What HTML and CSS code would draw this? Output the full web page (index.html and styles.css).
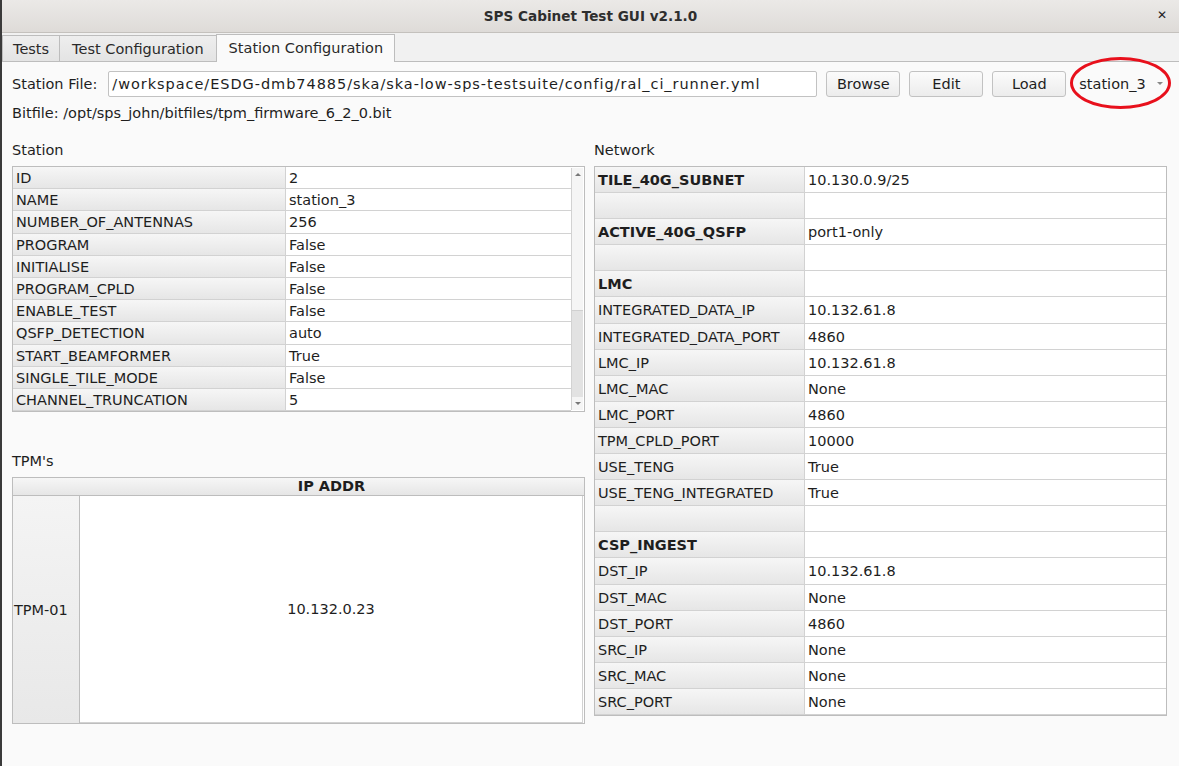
FILE: index.html
```html
<!DOCTYPE html>
<html>
<head>
    <title>SPS Cabinet Test GUI v2.1.0</title>
    <link rel="stylesheet" href="styles.css">
</head>
<body>
<div class="window">
    <div class="titlebar">
        <span class="title">SPS Cabinet Test GUI v2.1.0</span>
        <span class="close">&#x2715;</span>
    </div>

    <div class="tabs">
        <div class="tab">Tests</div>
        <div class="tab">Test Configuration</div>
        <div class="tab active">Station Configuration</div>
    </div>

    <div class="panel">
        <div class="file-row">
            <label class="file-label">Station File:</label>
            <div class="path">/workspace/ESDG-dmb74885/ska/ska-low-sps-testsuite/config/ral_ci_runner.yml</div>
            <button class="btn">Browse</button>
            <button class="btn">Edit</button>
            <button class="btn">Load</button>
            <div class="combo">
                <span>station_3</span>
                <span class="caret"></span>
                <div class="ring"></div>
            </div>
        </div>
        <div class="bitfile">Bitfile: /opt/sps_john/bitfiles/tpm_firmware_6_2_0.bit</div>

        <div class="columns">
            <div class="col">
                <div class="caption">Station</div>
                <div class="station-table">
                    <div class="grid station-grid">
                        <div class="key">ID</div><div class="val">2</div>
                        <div class="key">NAME</div><div class="val">station_3</div>
                        <div class="key">NUMBER_OF_ANTENNAS</div><div class="val">256</div>
                        <div class="key">PROGRAM</div><div class="val">False</div>
                        <div class="key">INITIALISE</div><div class="val">False</div>
                        <div class="key">PROGRAM_CPLD</div><div class="val">False</div>
                        <div class="key">ENABLE_TEST</div><div class="val">False</div>
                        <div class="key">QSFP_DETECTION</div><div class="val">auto</div>
                        <div class="key">START_BEAMFORMER</div><div class="val">True</div>
                        <div class="key">SINGLE_TILE_MODE</div><div class="val">False</div>
                        <div class="key">CHANNEL_TRUNCATION</div><div class="val">5</div>
                        <div class="key">&nbsp;</div><div class="val">&nbsp;</div>
                    </div>
                    <div class="scrollbar">
                        <div class="arrow up"></div>
                        <div class="track"><div class="thumb"></div></div>
                        <div class="arrow down"></div>
                    </div>
                </div>

                <div class="caption tpm-caption">TPM's</div>
                <div class="tpm-table">
                    <div class="tpm-head">
                        <div class="corner"></div>
                        <div class="head-cell">IP ADDR</div>
                    </div>
                    <div class="tpm-body">
                        <div class="row-head">TPM-01</div>
                        <div class="tpm-cell">10.132.0.23</div>
                    </div>
                </div>
            </div>

            <div class="col">
                <div class="caption">Network</div>
                <div class="grid net-grid">
                    <div class="key bold">TILE_40G_SUBNET</div><div class="val">10.130.0.9/25</div>
                    <div class="key"></div><div class="val"></div>
                    <div class="key bold">ACTIVE_40G_QSFP</div><div class="val">port1-only</div>
                    <div class="key"></div><div class="val"></div>
                    <div class="key bold">LMC</div><div class="val"></div>
                    <div class="key">INTEGRATED_DATA_IP</div><div class="val">10.132.61.8</div>
                    <div class="key">INTEGRATED_DATA_PORT</div><div class="val">4860</div>
                    <div class="key">LMC_IP</div><div class="val">10.132.61.8</div>
                    <div class="key">LMC_MAC</div><div class="val">None</div>
                    <div class="key">LMC_PORT</div><div class="val">4860</div>
                    <div class="key">TPM_CPLD_PORT</div><div class="val">10000</div>
                    <div class="key">USE_TENG</div><div class="val">True</div>
                    <div class="key">USE_TENG_INTEGRATED</div><div class="val">True</div>
                    <div class="key"></div><div class="val"></div>
                    <div class="key bold">CSP_INGEST</div><div class="val"></div>
                    <div class="key">DST_IP</div><div class="val">10.132.61.8</div>
                    <div class="key">DST_MAC</div><div class="val">None</div>
                    <div class="key">DST_PORT</div><div class="val">4860</div>
                    <div class="key">SRC_IP</div><div class="val">None</div>
                    <div class="key">SRC_MAC</div><div class="val">None</div>
                    <div class="key">SRC_PORT</div><div class="val">None</div>
                </div>
            </div>
        </div>
    </div>
</div>
</body>
</html>
```

FILE: styles.css
```css
:root {
    --bg: #fafafa;
    --text: #1e1e1e;
    --line: #d2d2d2;
    --frame: #bdbdbd;
    --head-top: #f6f6f6;
    --head-bottom: #e6e6e6;
}

body {
    margin: 0;
    background-color: var(--bg);
    color: var(--text);
    font-family: "DejaVu Sans", sans-serif;
    font-size: 14px;
}

.window {
    width: 1179px;
    height: 766px;
    border-left: 2px solid #3a3a3a;
    box-sizing: border-box;
    overflow: hidden;
}

.titlebar {
    height: 32px;
    background: linear-gradient(#ebe9e7, #dedbd8);
    border-bottom: 1px solid #c4c1bd;
    display: flex;
    align-items: center;
    justify-content: center;
    position: relative;
}

.title {
    font-weight: bold;
    font-size: 13.6px;
    color: #2e2e2e;
}

.close {
    position: absolute;
    right: 12px;
    top: 8px;
    font-size: 12px;
    font-weight: bold;
}

.tabs {
    display: flex;
    height: 27px;
    padding-top: 1px;
    border-bottom: 1px solid var(--frame);
    background-color: #f1f1f1;
}

.tab {
    padding: 0 10px;
    line-height: 26px;
    margin-top: 1px;
    background: linear-gradient(#eeeeee, #e4e4e4);
    border: 1px solid var(--frame);
    border-bottom: none;
    border-right: none;
    color: #2a2a2a;
    font-size: 14.5px;
    white-space: nowrap;
}

.tab + .tab {
    padding: 0 12px;
}

.tab.active {
    margin-top: 0;
    background: var(--bg);
    border-right: 1px solid var(--frame);
    margin-bottom: -1px;
    line-height: 27px;
    padding: 0 11px 0 12px;
}

.panel {
    padding: 8px 11px 0 10px;
}

.file-row {
    display: flex;
    align-items: center;
    gap: 9px;
    height: 27px;
}

.file-row > * {
    flex-shrink: 0;
}

.file-label {
    font-size: 14.5px;
    margin-right: 2px;
    white-space: nowrap;
}

.path {
    width: 704px;
    height: 24px;
    line-height: 24px;
    padding-left: 3px;
    background-color: #fff;
    border: 1px solid #c2c2c2;
    border-radius: 2px;
    font-size: 14.5px;
    letter-spacing: 0.95px;
    white-space: nowrap;
    overflow: hidden;
}

.btn {
    width: 74px;
    height: 26px;
    font-family: inherit;
    font-size: 14.5px;
    color: var(--text);
    background: linear-gradient(#fbfbfb, #ececec);
    border: 1px solid #c2c2c2;
    border-radius: 3px;
    padding: 0;
}

.combo {
    position: relative;
    width: 95px;
    height: 26px;
    display: flex;
    align-items: center;
    justify-content: space-between;
    padding: 0 5px 0 6px;
    box-sizing: border-box;
    font-size: 14.5px;
    margin-left: -2px;
}

.caret {
    width: 0;
    height: 0;
    border-left: 3px solid transparent;
    border-right: 3px solid transparent;
    border-top: 3px solid #888;
}

.ring {
    position: absolute;
    left: -3px;
    top: -14px;
    width: 95px;
    height: 46px;
    border: 3px solid #e8101c;
    border-radius: 50%;
}

.bitfile {
    margin-top: 8px;
    font-size: 14.5px;
    height: 20px;
}

.columns {
    display: flex;
    gap: 9px;
    margin-top: 17px;
}

.col {
    width: 573px;
}

.caption {
    font-size: 14.5px;
    height: 20px;
    margin-bottom: 4px;
}

.grid {
    display: grid;
    background-color: #fff;
}

.key, .val {
    box-sizing: border-box;
    padding-left: 3px;
    border-bottom: 1px solid var(--line);
    white-space: nowrap;
    overflow: hidden;
}

.key {
    background: linear-gradient(var(--head-top), var(--head-bottom));
    border-right: 1px solid var(--line);
}

.bold {
    font-weight: bold;
}

.station-table {
    display: flex;
    height: 246px;
    border: 1px solid var(--frame);
    box-sizing: border-box;
    overflow: hidden;
    background-color: #fff;
}

.station-grid {
    grid-template-columns: 273px 285px;
    grid-auto-rows: 22.2px;
    align-content: start;
    font-size: 14.5px;
    line-height: 22px;
}

.scrollbar {
    width: 13px;
    margin: 1px 1px 1px 0;
    display: flex;
    flex-direction: column;
    border-left: 1px solid var(--line);
    background-color: #f5f5f5;
}

.arrow {
    height: 13px;
    display: flex;
    justify-content: center;
    align-items: center;
}

.arrow.up::after {
    content: "";
    border-left: 3px solid transparent;
    border-right: 3px solid transparent;
    border-bottom: 3px solid #777;
}

.arrow.down::after {
    content: "";
    border-left: 3px solid transparent;
    border-right: 3px solid transparent;
    border-top: 3px solid #777;
}

.track {
    flex: 1;
    display: flex;
    flex-direction: column;
    justify-content: flex-end;
}

.thumb {
    height: 86px;
    background-color: #e2e2e2;
    border-top: 1px solid #d0d0d0;
}

.tpm-caption {
    margin-top: 41px;
}

.tpm-table {
    height: 247px;
    border: 1px solid var(--frame);
    box-sizing: border-box;
    display: flex;
    flex-direction: column;
    background-color: #fff;
    margin-top: 1px;
}

.tpm-head {
    display: flex;
    height: 17px;
    background: linear-gradient(var(--head-top), var(--head-bottom));
    border-bottom: 1px solid var(--frame);
}

.corner {
    width: 66px;
}

.head-cell {
    flex: 1;
    text-align: center;
    font-weight: bold;
    font-size: 14.5px;
    line-height: 17px;
}

.tpm-body {
    flex: 1;
    display: flex;
}

.row-head {
    width: 65px;
    background: linear-gradient(#f4f4f4, #e8e8e8);
    border-right: 1px solid var(--frame);
    display: flex;
    align-items: center;
    padding-left: 1px;
    font-size: 14.5px;
}

.tpm-cell {
    flex: 1;
    display: flex;
    align-items: center;
    justify-content: center;
    font-size: 14.5px;
    border-right: 1px solid var(--line);
    border-bottom: 1px solid var(--line);
    margin-right: 1px;
}

.net-grid {
    grid-template-columns: 210px 361px;
    grid-auto-rows: 26.1px;
    border: 1px solid var(--frame);
    width: 573px;
    box-sizing: border-box;
    font-size: 14.5px;
    line-height: 26px;
}
```
